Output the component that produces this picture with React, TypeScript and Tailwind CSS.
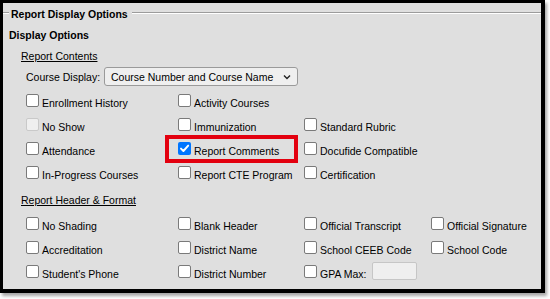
import React from 'react';

type Item = { label: string; checked?: boolean; disabled?: boolean; highlight?: boolean; gpa?: boolean } | null;

const contents: Item[][] = [
    [{ label: 'Enrollment History' }, { label: 'Activity Courses' }, null, null],
    [{ label: 'No Show', disabled: true }, { label: 'Immunization' }, { label: 'Standard Rubric' }, null],
    [{ label: 'Attendance' }, { label: 'Report Comments', checked: true, highlight: true }, { label: 'Docufide Compatible' }, null],
    [{ label: 'In-Progress Courses' }, { label: 'Report CTE Program' }, { label: 'Certification' }, null],
];

const header: Item[][] = [
    [{ label: 'No Shading' }, { label: 'Blank Header' }, { label: 'Official Transcript' }, { label: 'Official Signature' }],
    [{ label: 'Accreditation' }, { label: 'District Name' }, { label: 'School CEEB Code' }, { label: 'School Code' }],
    [{ label: "Student's Phone" }, { label: 'District Number' }, { label: 'GPA Max:', gpa: true }, null],
];

function Box({ checked, disabled }: { checked?: boolean; disabled?: boolean }) {
    if (checked) {
        return (
            <span className="mt-[6px] flex h-[13px] w-[13px] shrink-0 items-center justify-center rounded-[2px] bg-[#0075ff]">
                <svg width="11" height="11" viewBox="0 0 11 11" fill="none">
                    <path d="M2 5.6 L4.4 8 L9.2 2.6" stroke="white" strokeWidth="1.9" strokeLinecap="round" strokeLinejoin="round" />
                </svg>
            </span>
        );
    }
    return (
        <span
            className={`mt-[6px] h-[13px] w-[13px] shrink-0 rounded-[2px] border ${disabled ? 'border-[#c9c9c9] bg-[#efefef]' : 'border-[#7a7a7a] bg-white'}`}
        />
    );
}

function Cell({ item }: { item: Item }) {
    if (!item) return <div />;
    return (
        <div className="relative flex h-[24px] items-start gap-[3px]">
            <Box checked={item.checked} disabled={item.disabled} />
            <span className="mt-[7px] whitespace-nowrap">{item.label}</span>
            {item.gpa && <span className="ml-[2px] mt-[3px] h-[18px] w-[45px] rounded-[2px] border border-[#c6c6c6] bg-[#efefef]" />}
            {/* Red callout */}
            {item.highlight && <div className="absolute -left-[13px] -top-[1px] h-[28px] w-[133px] border-4 border-[#e3000f]" />}
        </div>
    );
}

function Grid({ rows }: { rows: Item[][] }) {
    return (
        <div className="grid grid-cols-[152px_126px_127px_1fr] pl-[23px]">
            {rows.map((row, r) => row.map((item, c) => <Cell key={`${r}-${c}`} item={item} />))}
        </div>
    );
}

export default function App() {
    return (
        <div className="h-[299px] w-[550px] bg-white">
            <div className="h-[293px] w-[545px] border-b-4 border-l-[3px] border-r-4 border-t-[3px] border-black bg-[#dfdfdf] font-['Liberation_Sans',Arial,sans-serif] text-[10.5px] leading-[16px] text-black shadow-[2px_3px_3px_rgba(0,0,0,0.35)]">
                {/* Legend */}
                <div className="flex items-start pt-[3px]">
                    <span className="mt-[6px] h-[2px] w-[6px] border-b border-t border-b-white border-t-[#9c9c9c]" />
                    <span className="ml-[2px] font-bold">Report Display Options</span>
                    <span className="ml-[4px] mt-[6px] h-[2px] flex-1 border-b border-t border-b-white border-t-[#9c9c9c]" />
                </div>

                <div className="mt-[5px] pl-[6px] font-bold">Display Options</div>
                <div className="mt-[5px] pl-[18px] underline">Report Contents</div>

                <div className="mt-[3px] flex h-[19px] items-center pl-[23px]">
                    <span className="w-[78px]">Course Display:</span>
                    <div className="flex h-[19px] w-[194px] items-center justify-between rounded-[3px] border border-[#9a9a9a] bg-[#efefef] pl-[6px] pr-[6px]">
                        <span>Course Number and Course Name</span>
                        <svg width="8" height="6" viewBox="0 0 8 6" fill="none">
                            <path d="M1 1.5 L4 4.5 L7 1.5" stroke="#222" strokeWidth="1.4" />
                        </svg>
                    </div>
                </div>

                <div className="mt-[2px]">
                    <Grid rows={contents} />
                </div>

                <div className="mt-[8px] pl-[18px] underline">Report Header &amp; Format</div>

                <div className="mt-[3px]">
                    <Grid rows={header} />
                </div>
            </div>
        </div>
    );
}
